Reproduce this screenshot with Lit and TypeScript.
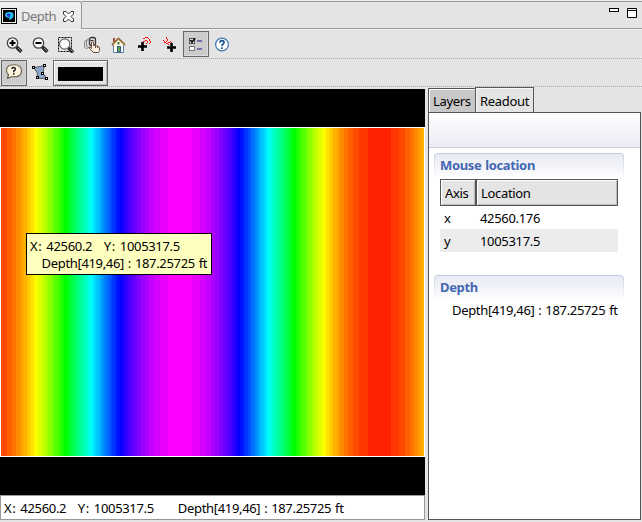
import { LitElement, html, css, svg } from "lit";
import { customElement } from "lit/decorators.js";

/* Each run is "x,y,w,h"; width and height default to one pixel. */
const runs = (fill: string, list: string) =>
  svg`<path fill=${fill} d=${list.trim().split(/\s+/).map((r) => {
    const [x, y, w = "1", h = "1"] = r.split(",");
    return `M${x} ${y}h${w}v${h}h-${w}z`;
  }).join("")}></path>`;

/* Depth follows a sine along x; the colour map has 60 hue levels. */
function depthBands(): string {
  const levels = 60, lo = 8, hi = 300;
  const stops: string[] = [];
  let prev = -1, start = 0;
  const hue = (l: number) => (lo + (l * (hi - lo)) / levels).toFixed(1);
  for (let x = 0; x <= 423; x++) {
    const v = (Math.cos(((x + 1.5 - 180) / 398.5) * 2 * Math.PI) + 1) / 2;
    const level = x === 423 ? -2 : Math.round(v * levels);
    if (level !== prev) {
      if (prev >= 0) stops.push(`hsl(${hue(prev)} 100% 50%) ${start}px ${x}px`);
      prev = level;
      start = x;
    }
  }
  return `linear-gradient(to right, ${stops.join(",")})`;
}

const lens = svg`
  <path d="M11.500 12L16.300 16.800" stroke="#222" stroke-width="3.600"/>
  <path d="M13 13L16 16" stroke="#999" stroke-width="1"/>
  <circle cx="7.500" cy="8" r="5.200" fill="#f6f6f6" stroke="#444" stroke-width="1.300"/>`;

const icons = {
  zoomIn: svg`${lens}<path d="M4.500 8h6M7.500 5v6" stroke="#000" stroke-width="2"/>`,
  zoomOut: svg`${lens}<path d="M4.500 8h6" stroke="#000" stroke-width="2"/>`,
  zoomBox: svg`<rect x="1.500" y="2.500" width="13" height="14" fill="none" stroke="#000" stroke-dasharray="2 1"/>
    <path d="M11.500 13L16 17.500" stroke="#222" stroke-width="3.400"/><path d="M13 14L16 17" stroke="#999"/>
    <circle cx="7.700" cy="9" r="5.200" fill="#fafafa" stroke="#666" stroke-width="1.200"/>`,
  pan: svg`<path d="M4.500 13.500H3.500Q1.500 13.500 1.500 11.500V7.500Q1.500 5.500 3.500 5.500H4.500M7.500 12.500H5.500Q3.500 12.500 3.500 10V6Q3.500 4 5.500 4H6.500" fill="#ddd" stroke="#888"/>
    <rect x="6.500" y="2.500" width="6" height="8" rx="2" fill="#ddd" stroke="#333" stroke-width="1.300"/><path d="M7.500 5.500h3" stroke="#333"/>
    <path d="M8.500 12.500V7Q9.500 5.500 10.500 7V10.500L14 11Q16.500 11.500 16.500 13V15.500L15.500 17.500H10.500L6 13Q5.500 11.500 7 12L8.500 13.500Z" fill="#fff0e2" stroke="#6b5142"/>
    <path d="M12.500 11v2M14.500 11.500v1.500" stroke="#6b5142"/>`,
  home: svg`<path d="M4.500 9L9.500 4.500L14.500 9V17.500H4.500Z" fill="#fffbe6" stroke="#5f7fb6"/>
    <rect x="4" y="3" width="2" height="4" fill="#b04a38"/>
    <path d="M3 10L9.500 3.500L16 10" fill="none" stroke="#8d6b3a" stroke-width="1.800"/><path d="M4 10L9.500 4.800L15 10" fill="none" stroke="#e0c080" stroke-width=".7"/>
    <rect x="8.500" y="11.500" width="3" height="5.500" fill="#62a640" stroke="#2f5a8f"/><rect x="8.500" y="7" width="2" height="2.500" fill="#3d8038"/>`,
  addUp: svg`<path d="M3 11.500h9M7.500 7v9" stroke="#000" stroke-width="2.600"/>
    ${runs("#f01010", "10,2,3 8,3,2 13,3,1 14,4,1,2 10,5,2 8,6,2 12,6,1,2 15,6,1,2 11,8,1 14,8,1")}`,
  addDown: svg`<path d="M6 12.500h9M10.500 8v9" stroke="#000" stroke-width="2.600"/>
    ${runs("#f01010", "5,2,1,2 6,4,1,2 5,6,1 3,7,2 2,5,1 3,6,1 7,7,2 9,6,1 5,8,2 7,9,1 10,7,1")}`,
  list: svg`<rect x="2.500" y="3.500" width="5" height="5" fill="#fff" stroke="#555"/><rect x="2.500" y="11.500" width="5" height="4" fill="#fff" stroke="#777"/>
    <path d="M3.500 5l1.500 2.200L8 3.200" fill="none" stroke="#000" stroke-width="1.600"/><path d="M10 6h5M10 14h5" stroke="#7070a8" stroke-width="2"/>`,
  help: svg`<circle cx="9" cy="9.500" r="6.400" fill="#fff" stroke="#3c78ae" stroke-width="1.200"/>
    <path d="M6.900 7.800Q7 5.700 9.100 5.700Q11.200 5.800 11 7.600Q10.900 8.600 9.800 9.200Q9 9.700 9 11M9 12.200v1.800" fill="none" stroke="#1d5795" stroke-width="1.800"/>`,
  bubble: svg`<path d="M3.500 10.500L2.500 14.300L6.500 12.700Q16.500 13.500 16.500 7Q16.500 .8 9 .8Q1.500 .8 1.500 6.500Q1.500 9 3.500 10.500Z" fill="#fff6de" stroke="#635747" stroke-width="1.100"/>
    <path d="M6.900 5Q7 3.500 8.700 3.500T10.400 5Q10.400 6.200 8.800 7V8.300M8.800 9v1.700" fill="none" stroke="#222" stroke-width="1.500"/>`,
  polygon: svg`<path d="M2.700 3.700L13.300 1.700L12 9L16 15L6.700 14Q7.500 8 2.700 3.700Z" fill="#8ba8cc" stroke="#555"/>
    <g fill="#fff" stroke="#000"><rect x="1.500" y="2.500" width="2" height="2"/><rect x="12.500" y=".5" width="2" height="2"/><rect x="10.500" y="8.500" width="2" height="2"/><rect x="14.500" y="13.500" width="2" height="2"/><rect x="5.500" y="12.500" width="2" height="2"/></g>`,
};

@customElement("app-root")
export class AppRoot extends LitElement {
  static styles = css`
    :host { display: grid; grid-template-rows: 29px 30px 28px 433px; row-gap: 0; width: 642px; height: 522px; overflow: hidden;
      background: #e4e4e4; color: #000; font: 13px/17px "Noto Sans", "Open Sans", sans-serif; letter-spacing: -.33px; word-spacing: .8px; }
    * { box-sizing: border-box; }
    svg { display: block; flex: none; }
    .pre { white-space: pre; }
    .axis { letter-spacing: .7px; }
    .top { display: flex; border-top: 1px solid #eee; justify-content: space-between; }
    .bar { flex: 1; display: flex; justify-content: flex-end; gap: 8px; padding: 6px 5px 0 0;
      border-top: 1px solid #999; border-bottom: 1px solid #999; }
    .view { display: flex; align-items: center; width: 82px; padding: 2px 0 0 1px; border: solid #999; border-width: 1px 1px 0 0;
      border-top-right-radius: 3px; background: linear-gradient(#f0f0f0, #e6e6e6); color: #777; }
    .view span { width: 36px; margin: 0 6px 0 4px; letter-spacing: -.5px; }
    .view svg { margin-top: -1px; }
    .tools { display: flex; align-items: center; border-bottom: 1px dotted #aaa; padding-left: 1px; }
    .tools.first { border-top: 1px solid #f4f4f4; }
    .tool { width: 26px; height: 26px; display: grid; place-items: center; border: 1px solid transparent; flex: none; }
    .on { border-color: #666; background: #ccc; box-shadow: inset -1px -1px #ddd; }
    .colour { width: 55px; height: 26px; border: 1px solid #666; padding: 6px 4px 5px; box-shadow: inset 1px 1px #fff, inset -1px -1px #bbb; }
    .ink { height: 14px; background: #000; }
    .main { display: grid; grid-template-columns: 425px 213px; gap: 3px; padding-top: 2px; height: 435px; }
    .left { display: flex; flex-direction: column; }
    .canvas { position: relative; height: 406px; background: #000; padding-top: 38px; }
    .image { height: 330px; width: 425px; border: 1px solid #fff; }
    .tip { position: absolute; left: 26px; top: 144px; width: 186px; height: 42px; padding: 4px 0 0 3px;
      border: 1px solid #000; background: #ffffc0; }
    .status { height: 25px; border: 1px solid #999; background: #fff; padding: 4px 0 0 3px; display: flex; gap: 24px; }
    .right { display: flex; flex-direction: column; margin-top: -2px; height: 433px; }
    .tabs { display: flex; align-items: flex-end; height: 25px; }
    .tab { height: 24px; border: 1px solid #555; border-bottom: 0; padding: 4px; box-shadow: inset 1px 1px #f8f8f8; }
    .tab.a { width: 48px; background: #c8c8c8; }
    .tab.b { width: 59px; height: 26px; margin: 0 0 -1px -1px; padding-top: 5px; background: #e4e4e4; }
    .body { flex: 1; border: 1px solid #555; background: #fff; }
    .head { height: 35px; border-bottom: 1px solid #c9cee4; background: linear-gradient(#fff, #ebecf4); }
    .section { margin: 5px 0 0 5px; width: 190px; height: 26px; padding: 3px 0 0 6px; border-top: 1px solid #c5cbe0; border-radius: 4px 4px 0 0;
      background: linear-gradient(#c9cfe3, #fff) 0 0/1px 100% no-repeat, linear-gradient(#c9cfe3, #fff) 100% 0/1px 100% no-repeat, linear-gradient(#e8eaf3, #fff);
      color: #4467b3; font-weight: 700; letter-spacing: -.35px; }
    .table { display: grid; grid-template-columns: 36px 142px; width: 178px; margin-left: 11px; }
    .th { height: 27px; padding: 5px 4px; border: 1px solid #555; background: #e4e4e4; box-shadow: inset 1px 1px #fff, inset -1px -1px #bbb; }
    .td { height: 23px; padding: 4px 4px 2px; }
    .alt { background: #ececec; }
    .section.second { margin-top: 23px; }
    .value { margin: 1px 0 0 23px; }
  `;

  private icon(shape: unknown, on = false) {
    return html`<div class="tool ${on ? "on" : ""}"><svg width="18" height="18" viewBox="0 0 18 18">${shape}</svg></div>`;
  }

  private position() {
    return html`<span class="pre"><span class="axis">X:</span> 42560.2   <span class="axis">Y:</span> 1005317.5</span>`;
  }

  render() {
    const i = icons;
    return html`
      <div class="top">
        <div class="view">
          <svg width="16" height="16"><rect width="16" height="16" fill="#000"/><rect x="1.500" y="1.500" width="13" height="13" fill="none" stroke="#eee"/>
            <path d="M4 7Q4 3.500 9 4Q13 4 12.500 8Q11.500 11.500 8 12L8.500 9.500Q4.500 10.500 4 7Z" fill="#20c0e8"/><path d="M5.500 6.500Q7 5 9.500 6L9 9Q6 9.500 5.500 6.500Z" fill="#2038e0"/></svg>
          <span>Depth</span>
          <svg width="11" height="11"><path d="M.5 .5h2.500L5.500 3L8 .5h2.500V3L8 5.500L10.500 8v2.500H8L5.500 8L3 10.500H.5V8L3 5.500L.5 3z" fill="#fff" stroke="#333"/></svg>
        </div>
        <div class="bar">
          <svg width="10" height="4"><rect x=".5" y=".5" width="9" height="3" fill="#fff" stroke="#000"/></svg>
          <svg width="10" height="10"><path d="M.5 .5h9v9h-9zM0 2.500h10" fill="#fff" stroke="#000"/></svg>
        </div>
      </div>
      <div class="tools first">
        ${this.icon(i.zoomIn)}${this.icon(i.zoomOut)}${this.icon(i.zoomBox)}${this.icon(i.pan)}${this.icon(i.home)}
        ${this.icon(i.addUp)}${this.icon(i.addDown)}${this.icon(i.list, true)}${this.icon(i.help)}
      </div>
      <div class="tools">${this.icon(i.bubble, true)}${this.icon(i.polygon)}<div class="colour"><div class="ink"></div></div></div>
      <div class="main">
        <div class="left">
          <div class="canvas">
            <div class="image" style="background:${depthBands()}"></div>
            <div class="tip"><div>${this.position()}</div><div class="pre">   Depth[419,46] : 187.25725 ft</div></div>
          </div>
          <div class="status">${this.position()}<span>Depth[419,46] : 187.25725 ft</span></div>
        </div>
        <div class="right">
          <div class="tabs"><div class="tab a">Layers</div><div class="tab b">Readout</div></div>
          <div class="body">
            <div class="head"></div>
            <div class="section">Mouse location</div>
            <div class="table">
              <div class="th">Axis</div><div class="th">Location</div>
              <div class="td">x</div><div class="td">42560.176</div>
              <div class="td alt">y</div><div class="td alt">1005317.5</div>
            </div>
            <div class="section second">Depth</div>
            <div class="value">Depth[419,46] : 187.25725 ft</div>
          </div>
        </div>
      </div>`;
  }
}
